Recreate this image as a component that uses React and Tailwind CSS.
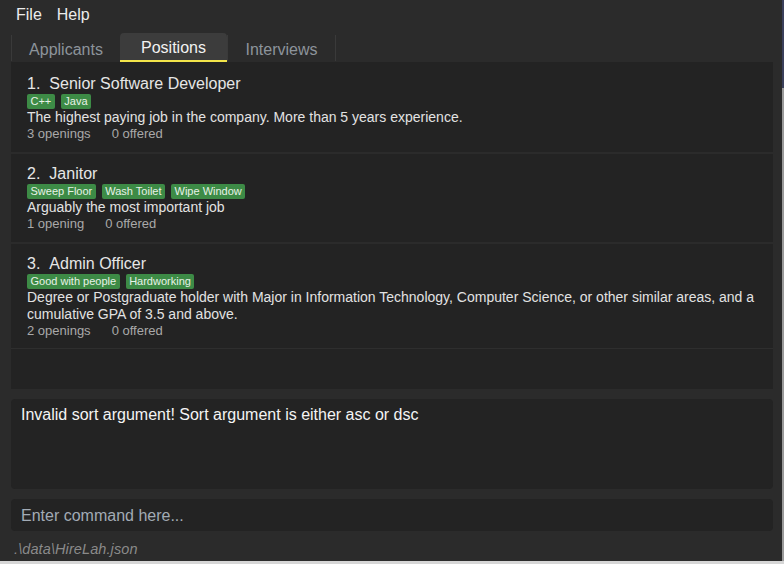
import React from "react";

const positions = [
  {
    n: 1,
    title: "Senior Software Developer",
    tags: ["C++", "Java"],
    desc: "The highest paying job in the company. More than 5 years experience.",
    openings: "3 openings",
    offered: "0 offered",
  },
  {
    n: 2,
    title: "Janitor",
    tags: ["Sweep Floor", "Wash Toilet", "Wipe Window"],
    desc: "Arguably the most important job",
    openings: "1 opening",
    offered: "0 offered",
  },
  {
    n: 3,
    title: "Admin Officer",
    tags: ["Good with people", "Hardworking"],
    desc: "Degree or Postgraduate holder with Major in Information Technology, Computer Science, or other similar areas, and a cumulative GPA of 3.5 and above.",
    openings: "2 openings",
    offered: "0 offered",
  },
];

function Item({ p, last }) {
  return (
    <div className={"pl-[16px] pr-[12px] pt-[11px] " + (last ? "pb-[9px] border-b border-[#2e2e2e]" : "pb-[10px]")}>
      <div className="text-[16px] leading-[18px] text-[#e6e6e6] whitespace-nowrap">
        <span>{p.n}.</span>
        <span className="ml-[9px]">{p.title}</span>
      </div>
      <div className="flex gap-[6px] h-[15px] mt-[1px]">
        {p.tags.map((t) => (
          <span
            key={t}
            className="bg-[#3d8b46] text-[#e8f2e8] text-[11px] leading-[15px] px-[3.5px] rounded-[2px]"
          >
            {t}
          </span>
        ))}
      </div>
      <div className="text-[14px] leading-[17px] text-[#e2e2e2]">{p.desc}</div>
      <div className="text-[13px] leading-[16px] text-[#a9a9a9] flex">
        <span>{p.openings}</span>
        <span className="ml-[21px]">{p.offered}</span>
      </div>
    </div>
  );
}

export default function App() {
  return (
    <div className="w-[784px] h-[564px] flex flex-col font-['Liberation_Sans',Arial,sans-serif] overflow-hidden">
      <div className="flex flex-1 min-h-0">
        <div className="w-[782px] bg-[#2b2b2b] flex flex-col">
          {/* Menu bar */}
          <div className="h-[28px] pt-[5px] pl-[16px] flex text-[16px] leading-[20px] text-[#ececec]">
            <span>File</span>
            <span className="ml-[15px]">Help</span>
          </div>
          {/* Tabs */}
          <div className="h-[34px] pl-[11px] flex items-end">
            <div className="w-px h-[26px] mb-[1px] bg-[#3a3a3a]" />
            <div className="w-[108px] h-[29px] pt-[7px] text-center text-[16px] leading-[20px] text-[#8d949b]">
              Applicants
            </div>
            <div className="w-[107px] h-[29px] pt-[5px] text-center text-[16px] leading-[20px] text-[#f2f2f2] bg-[#3c3c3c] rounded-t-[4px] border-b-2 border-[#f3e54a]">
              Positions
            </div>
            <div className="w-px h-[26px] mb-[1px] bg-[#3a3a3a]" />
            <div className="w-[107px] h-[29px] pt-[7px] text-center text-[16px] leading-[20px] text-[#8d949b]">
              Interviews
            </div>
            <div className="w-px h-[26px] mb-[1px] bg-[#3a3a3a]" />
          </div>
          {/* List panel */}
          <div className="ml-[11px] mr-[9px] h-[327px] bg-[#232323] pt-[2px] flex flex-col">
            {positions.map((p, i) => (
              <React.Fragment key={p.n}>
                {i > 0 && <div className="h-[2px] bg-[#2b2b2b]" />}
                <Item p={p} last={i === positions.length - 1} />
              </React.Fragment>
            ))}
          </div>
          {/* Result box */}
          <div className="ml-[11px] mr-[9px] mt-[10px] h-[90px] bg-[#232323] rounded-[4px] pl-[10px] pt-[6px] text-[16px] leading-[20px] text-[#f4f4f4]">
            Invalid sort argument! Sort argument is either asc or dsc
          </div>
          {/* Command box */}
          <div className="ml-[11px] mr-[9px] mt-[10px] h-[32px] bg-[#232323] rounded-[4px] pl-[10px] pt-[7px] text-[16px] leading-[20px] text-[#a2abb5]">
            Enter command here...
          </div>
          {/* Status bar */}
          <div className="flex-1 pl-[14px] pt-[10px] text-[14.5px] leading-[16px] tracking-[0.1px] italic text-[#8a8a8a]">
            .\data\HireLah.json
          </div>
        </div>
        <div className="w-[2px] flex flex-col">
          <div className="h-[88px] bg-[#3a3f5a]" />
          <div className="flex-1 bg-[#9a9a9a]" />
        </div>
      </div>
      <div className="h-[3px] bg-[#d6d6d6]" />
    </div>
  );
}
